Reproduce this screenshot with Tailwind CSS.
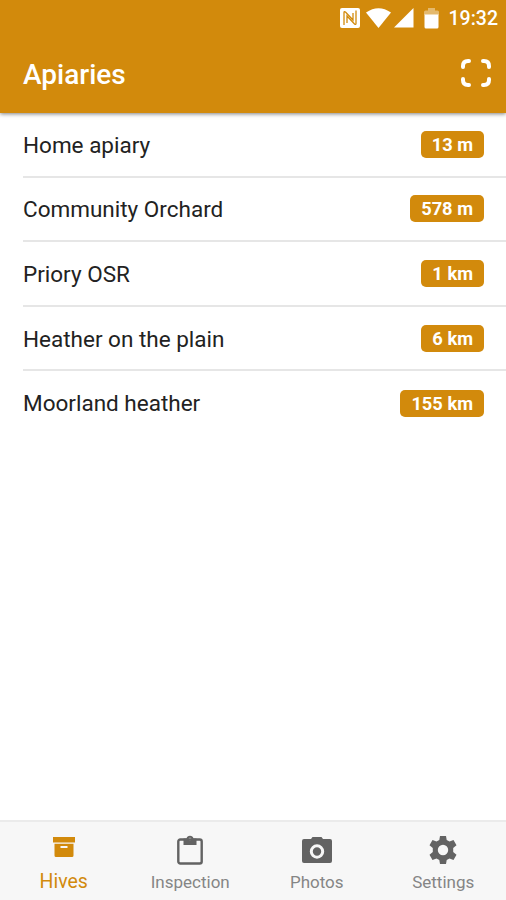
<!DOCTYPE html>
<html lang="en">
<head>
  <meta charset="UTF-8" />
  <meta name="viewport" content="width=device-width, initial-scale=1.0" />
  <title>Apiaries</title>
  <script src="https://cdn.jsdelivr.net/npm/@tailwindcss/browser@4"></script>
</head>

<body class="h-screen flex flex-col overflow-hidden bg-white font-[Roboto,sans-serif]">
  <header class="relative h-[113px] shrink-0 bg-[#d28a0c] text-white shadow-[0_1px_4px_rgba(0,0,0,0.5)]">
    <!-- status bar -->
    <div class="h-9 flex items-center justify-end pr-2">
      <svg class="w-5 h-5 mr-[6px]" viewBox="0 0 20 20">
        <rect width="20" height="20" rx="2" fill="#fff" />
        <path d="M4 17V4.500Q4 3 5.500 4L13 12V5M16 2.500v13q0 1.500-1.500.5L7 8v7" fill="none" stroke="#d28a0c" stroke-width="1.300" />
      </svg>
      <svg class="w-[25px] h-5 mr-[3px]" viewBox="0 0 25 20" fill="currentColor"><path d="M0 4.500Q12.500-4 25 4.500L12.500 20Z" /></svg>
      <svg class="w-5 h-5 mr-[10px]" viewBox="0 0 20 20" fill="currentColor"><path d="M0 19.500 19.500 0v19.500Z" /></svg>
      <svg class="w-[15px] h-[21px] mr-[10px]" viewBox="0 0 15 21" fill="currentColor">
        <path d="M1.500 2.500H4V0h7v2.500h2.500Q15 2.500 15 4v3H0V4Q0 2.500 1.500 2.500Z" opacity=".4" />
        <path d="M.5 6.500h14V19q0 1.500-1.500 1.500H2Q.5 20.500.5 19Z" />
      </svg>
      <span class="pt-0.5 text-[19.500px] leading-6 font-medium">19:32</span>
    </div>
    <!-- toolbar -->
    <div class="h-[77px] flex items-center justify-between pl-[23px] pr-[15px]">
      <h1 class="text-[28px] leading-8 font-medium">Apiaries</h1>
      <svg class="w-[30px] h-[28px] mb-1" viewBox="0 0 30 28" fill="none" stroke="currentColor" stroke-width="4" stroke-linecap="round">
        <path d="M2 8V7q0-5 5-5h1M22 2h1q5 0 5 5v1M28 20v1q0 5-5 5h-1M8 26H7q-5 0-5-5v-1" />
      </svg>
    </div>
  </header>

  <main class="flex-1 text-[22.500px] leading-7 text-[#222]">
    <ul class="pl-[23px]">
      <li class="h-[64.600px] flex items-center justify-between pr-[22px] border-b-2 border-[#e6e6e6]">
        <span class="pt-px">Home apiary</span>
        <span class="h-[27px] px-[11px] rounded-[5px] bg-[#d28a0c] text-white text-[18.300px] leading-[27px] font-bold">13 m</span>
      </li>
      <li class="h-[64.600px] flex items-center justify-between pr-[22px] border-b-2 border-[#e6e6e6]">
        <span class="pt-px">Community Orchard</span>
        <span class="h-[27px] px-[11px] rounded-[5px] bg-[#d28a0c] text-white text-[18.300px] leading-[27px] font-bold">578 m</span>
      </li>
      <li class="h-[64.600px] flex items-center justify-between pr-[22px] border-b-2 border-[#e6e6e6]">
        <span class="pt-px">Priory OSR</span>
        <span class="h-[27px] px-[11px] rounded-[5px] bg-[#d28a0c] text-white text-[18.300px] leading-[27px] font-bold">1 km</span>
      </li>
      <li class="h-[64.600px] flex items-center justify-between pr-[22px] border-b-2 border-[#e6e6e6]">
        <span class="pt-px">Heather on the plain</span>
        <span class="h-[27px] px-[11px] rounded-[5px] bg-[#d28a0c] text-white text-[18.300px] leading-[27px] font-bold">6 km</span>
      </li>
      <li class="h-[64.600px] flex items-center justify-between pr-[22px]">
        <span class="pb-px">Moorland heather</span>
        <span class="h-[27px] px-[11px] rounded-[5px] bg-[#d28a0c] text-white text-[18.300px] leading-[27px] font-bold">155 km</span>
      </li>
    </ul>
  </main>

  <nav class="h-20 shrink-0 grid grid-cols-4 bg-[#f7f7f7] border-t-2 border-[#ebebeb] text-[#858585] text-[17px] leading-6">
    <a class="flex flex-col items-center pt-[15px] pl-px text-[#d28a0c] text-[19.500px]">
      <svg class="w-[22px] h-5 mb-[13px]" viewBox="0 0 22 20" fill="currentColor">
        <path d="M0 0h22v5.500H0Z" />
        <path fill-rule="evenodd" d="M1.500 6.700h19V18.500q0 1.500-1.500 1.500h-16q-1.500 0-1.500-1.500ZM7.500 9v2h7V9Z" />
      </svg>
      <span>Hives</span>
    </a>
    <a class="flex flex-col items-center pt-[13px] pl-px">
      <svg class="w-[26px] h-[30px] mb-[5px] text-[#636363]" viewBox="0 0 26 30">
        <rect x="1.300" y="4.500" width="23.400" height="24" rx="2" fill="none" stroke="currentColor" stroke-width="2.400" />
        <path fill="currentColor" fill-rule="evenodd" d="M6.500 3.500h3a3.600 3.600 0 0 1 7 0h3v6.500h-13ZM13 2.700a1.400 1.400 0 1 0 0 2.800 1.400 1.400 0 0 0 0-2.800Z" />
      </svg>
      <span>Inspection</span>
    </a>
    <a class="flex flex-col items-center pt-[15px] pl-px">
      <svg class="w-[30px] h-[26px] mb-[7px] text-[#636363]" viewBox="0 0 30 26" fill="currentColor">
        <path d="M2 2h7l1.500-2h9L21 2h7q2 0 2 2v20q0 2-2 2H2q-2 0-2-2V4q0-2 2-2Z" />
        <circle cx="15" cy="14.500" r="5.700" fill="none" stroke="#f7f7f7" stroke-width="3" />
      </svg>
      <span>Photos</span>
    </a>
    <a class="flex flex-col items-center pt-[14px] pl-px">
      <svg class="w-[28px] h-[28px] mb-[6px] text-[#636363]" viewBox="0 0 28 28" fill="currentColor">
        <path fill-rule="evenodd" d="M11 0h6l.7 4 2.800 1.600 4-1.500 3 5.200-3.300 2.700v4l3.300 2.700-3 5.200-4-1.500-2.800 1.600-.7 4h-6l-.7-4-2.800-1.600-4 1.500-3-5.200L3.800 16v-4L.5 9.300l3-5.200 4 1.500L10.300 4ZM14 8.800a5.200 5.200 0 1 0 0 10.400 5.200 5.200 0 0 0 0-10.400Z" />
      </svg>
      <span>Settings</span>
    </a>
  </nav>
</body>
</html>
